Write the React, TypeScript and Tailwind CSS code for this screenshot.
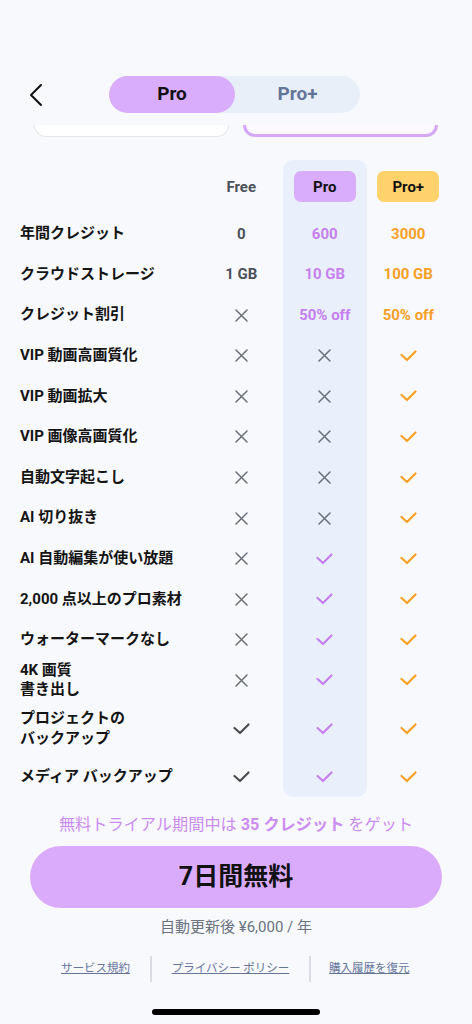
import * as React from "react";

type Cell = "x" | "check" | string;

const rows: { label: string[]; free: Cell; pro: Cell; plus: Cell; h: string }[] = [
  { label: ["年間クレジット"], free: "0", pro: "600", plus: "3000", h: "h-[40.6px]" },
  { label: ["クラウドストレージ"], free: "1 GB", pro: "10 GB", plus: "100 GB", h: "h-[40.6px]" },
  { label: ["クレジット割引"], free: "x", pro: "50% off", plus: "50% off", h: "h-[40.6px]" },
  { label: ["VIP 動画高画質化"], free: "x", pro: "x", plus: "check", h: "h-[40.6px]" },
  { label: ["VIP 動画拡大"], free: "x", pro: "x", plus: "check", h: "h-[40.6px]" },
  { label: ["VIP 画像高画質化"], free: "x", pro: "x", plus: "check", h: "h-[40.6px]" },
  { label: ["自動文字起こし"], free: "x", pro: "x", plus: "check", h: "h-[40.6px]" },
  { label: ["AI 切り抜き"], free: "x", pro: "x", plus: "check", h: "h-[40.6px]" },
  { label: ["AI 自動編集が使い放題"], free: "x", pro: "check", plus: "check", h: "h-[40.6px]" },
  { label: ["2,000 点以上のプロ素材"], free: "x", pro: "check", plus: "check", h: "h-[40.6px]" },
  { label: ["ウォーターマークなし"], free: "x", pro: "check", plus: "check", h: "h-[40.6px]" },
  { label: ["4K 画質", "書き出し"], free: "x", pro: "check", plus: "check", h: "h-[40px]" },
  { label: ["プロジェクトの", "バックアップ"], free: "check", pro: "check", plus: "check", h: "h-[56.7px]" },
  { label: ["メディア バックアップ"], free: "check", pro: "check", plus: "check", h: "h-[40px]" },
];

function Cross() {
  return (
    <svg width="13" height="13" viewBox="0 0 13 13" fill="none">
      <path d="M1 1L12 12M12 1L1 12" stroke="#6b7078" strokeWidth="1.5" strokeLinecap="round" />
    </svg>
  );
}

function Check({ color }: { color: string }) {
  return (
    <svg width="17" height="12" viewBox="0 0 17 12" fill="none">
      <path d="M1.5 5L7 10L15.5 1.5" stroke={color} strokeWidth="2.2" strokeLinecap="round" strokeLinejoin="round" />
    </svg>
  );
}

function Value({ v, color, checkColor }: { v: Cell; color: string; checkColor: string }) {
  if (v === "x") return <Cross />;
  if (v === "check") return <Check color={checkColor} />;
  return <span className={`text-[15px] font-bold ${color}`}>{v}</span>;
}

export default function App() {
  return (
    <div
      className="relative min-h-[1024px] w-[472px] overflow-hidden bg-[#f8f9fd] text-[#111]"
      style={{ fontFamily: 'Roboto, "Noto Sans CJK JP", sans-serif' }}
    >
      {/* Header */}
      <div className="flex h-[76px]" />
      <div className="relative flex h-[37px] items-center">
        <button className="absolute left-[28px] top-[7px]">
          <svg width="16" height="24" viewBox="0 0 16 24" fill="none">
            <path d="M13 2L3 12L13 22" stroke="#111" strokeWidth="2" strokeLinecap="round" strokeLinejoin="round" />
          </svg>
        </button>
        <div className="ml-[109px] flex h-[37px] w-[251px] rounded-full bg-[#e9eff9]">
          <div className="flex w-[126px] items-center justify-center rounded-full bg-[#d9adfb] text-[19px] font-bold text-[#111]">
            Pro
          </div>
          <div className="flex flex-1 items-center justify-center text-[19px] font-bold text-[#64759a]">Pro+</div>
        </div>
      </div>

      {/* Plan cards, scrolled under the header */}
      <div className="mt-[12px] flex h-[12px] gap-[14px] overflow-hidden px-[34px]">
        <div className="h-full w-[195px] rounded-b-[14px] border-x border-b border-[#e4e6eb] bg-white" />
        <div className="h-full w-[195px] rounded-b-[14px] border-x-[3px] border-b-[3px] border-[#d5a8f6] bg-[#fbf9ff]" />
      </div>

      {/* Comparison table */}
      <div className="mt-[23px] grid grid-cols-[1fr_83.5px_83.5px_83.5px] pl-5 pr-[22px]">
        <div className="h-[53.7px]" />
        <div className="flex items-center justify-center text-[15px] font-bold text-[#4b5059]">Free</div>
        <div className="flex items-center justify-center rounded-t-[10px] bg-[#eaf0fb]">
          <div className="flex h-[31px] w-[62px] items-center justify-center rounded-[7px] bg-[#d9adfb] text-[15px] font-bold">
            Pro
          </div>
        </div>
        <div className="flex items-center justify-center">
          <div className="flex h-[31px] w-[62px] items-center justify-center rounded-[7px] bg-[#ffd26c] text-[15px] font-bold">
            Pro+
          </div>
        </div>

        {rows.map((r, i) => (
          <React.Fragment key={i}>
            <div className={`flex flex-col justify-center ${r.h} text-[15px] font-bold leading-[19.5px] text-[#141414]`}>
              {r.label.map((l) => (
                <span key={l}>{l}</span>
              ))}
            </div>
            <div className="flex items-center justify-center">
              <Value v={r.free} color="text-[#4b5059]" checkColor="#4a4d54" />
            </div>
            <div
              className={`flex items-center justify-center bg-[#eaf0fb] ${
                i === rows.length - 1 ? "rounded-b-[10px]" : ""
              }`}
            >
              <Value v={r.pro} color="text-[#c57ff0]" checkColor="#c57ff0" />
            </div>
            <div className="flex items-center justify-center">
              <Value v={r.plus} color="text-[#f7a026]" checkColor="#f7a026" />
            </div>
          </React.Fragment>
        ))}
      </div>

      {/* Trial CTA */}
      <p className="mt-[17px] text-center text-[16.2px] leading-[22px] text-[#cb8cf0]">
        無料トライアル期間中は <span className="font-bold">35 クレジット</span> をゲット
      </p>
      <div className="mt-[10px] px-[30px]">
        <button className="flex h-[62px] w-full items-center justify-center rounded-full bg-[#dbabfb] text-[25px] font-bold text-[#111]">
          7日間無料
        </button>
      </div>
      <p className="mt-[9px] text-center text-[15px] leading-[20px] text-[#6b7280]">自動更新後 ¥6,000 / 年</p>

      {/* Footer links */}
      <div className="mt-[19px] flex items-center">
        <a className="w-[150px] pr-[20px] text-right text-[11.5px] text-[#66749a] underline">サービス規約</a>
        <div className="h-[26px] w-[2px] bg-[#d9dce3]" />
        <a className="w-[157px] text-center text-[11.5px] text-[#66749a] underline">プライバシー ポリシー</a>
        <div className="h-[26px] w-[2px] bg-[#d9dce3]" />
        <a className="pl-[18px] text-left text-[11.5px] text-[#66749a] underline">購入履歴を復元</a>
      </div>

      {/* Home indicator */}
      <div className="absolute bottom-[9px] left-[152px] h-[6px] w-[168px] rounded-full bg-black" />
    </div>
  );
}
